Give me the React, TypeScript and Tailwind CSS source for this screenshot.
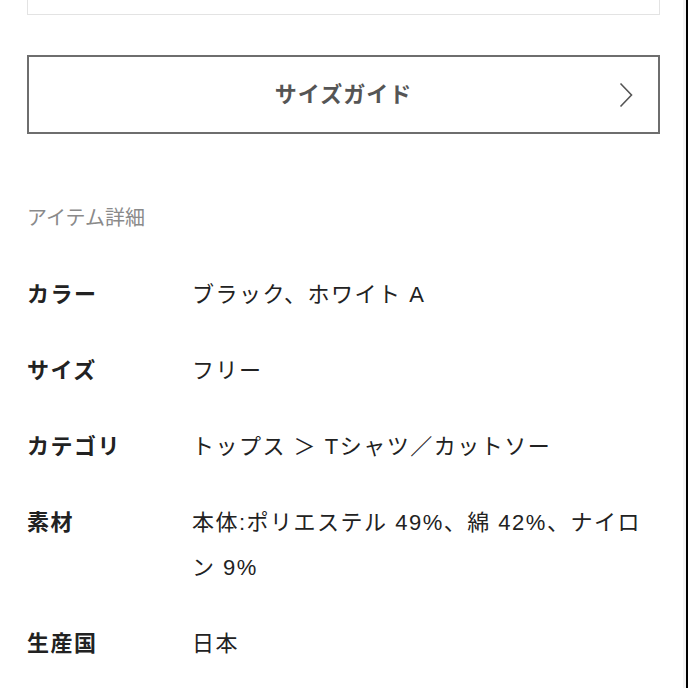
const details = [
  { label: 'カラー', value: 'ブラック、ホワイト A' },
  { label: 'サイズ', value: 'フリー' },
  { label: 'カテゴリ', value: 'トップス ＞ Tシャツ／カットソー' },
  { label: '素材', value: '本体:ポリエステル 49%、綿 42%、ナイロン 9%' },
  { label: '生産国', value: '日本' },
];

export default function App() {
  return (
    <div
      className="flex h-[688px] w-[688px] overflow-hidden bg-white"
      style={{ fontFamily: '"Liberation Sans", "Noto Sans CJK JP", sans-serif' }}
    >
      <div className="flex-1 pl-[27px] pr-[23px]">
        {/* previous card, cut off at top */}
        <div className="h-[15px] border-x border-b border-[#e3e3e3]" />

        {/* size guide button */}
        <button className="relative mt-[40px] flex h-[79px] w-full items-center justify-center border-2 border-[#6e6e6e] bg-white">
          <span className="text-[22px] font-bold tracking-[1px] text-[#555]">サイズガイド</span>
          <svg
            className="absolute right-[25px] top-1/2 -translate-y-1/2"
            width="14"
            height="26"
            viewBox="0 0 14 26"
            fill="none"
            stroke="#555"
            strokeWidth="1.6"
          >
            <path d="M1.5 1.5 L12.5 13 L1.5 24.5" />
          </svg>
        </button>

        {/* item details */}
        <h2 className="mt-[69px] text-[20px] leading-[30px] text-[#8a8a8a]">アイテム詳細</h2>

        <dl className="mt-[39px] flex flex-col gap-[31px]">
          {details.map((d) => (
            <div key={d.label} className="flex text-[22px] leading-[45px] tracking-[1.5px] text-[#222]">
              <dt className="w-[165px] shrink-0 font-bold">{d.label}</dt>
              <dd className="flex-1 pr-[12px]">{d.value}</dd>
            </div>
          ))}
        </dl>
      </div>
      <div className="w-[3px] bg-[#f4f4f4]" />
      <div className="w-[2px] bg-black" />
    </div>
  );
}
